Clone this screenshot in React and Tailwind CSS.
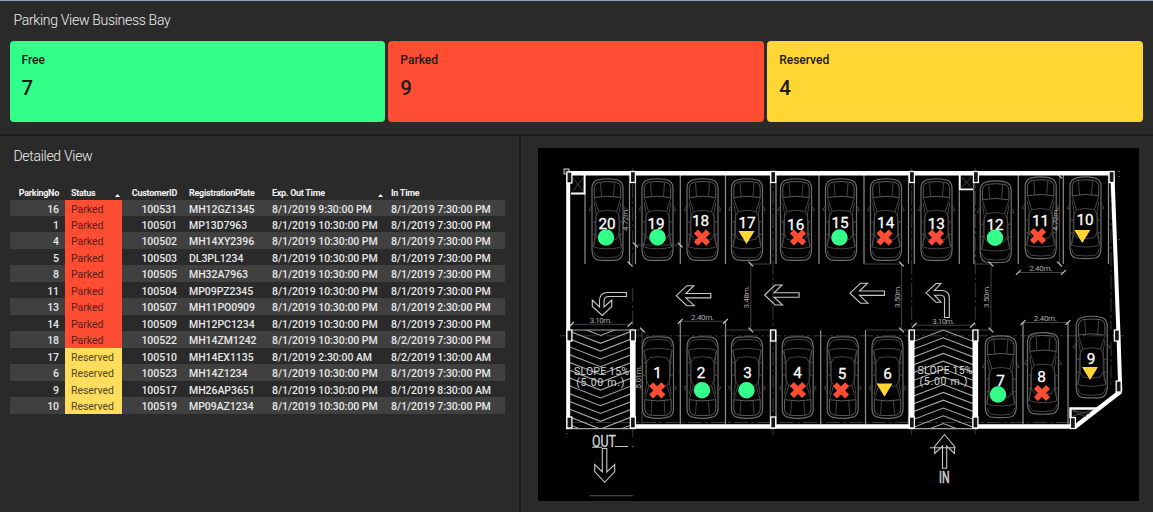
const SUMMARY = [
  { label: 'Free', value: 7, color: 'bg-[#33ff8a]' },
  { label: 'Parked', value: 9, color: 'bg-[#ff4d33]' },
  { label: 'Reserved', value: 4, color: 'bg-[#ffd633]' },
];

const ROWS = [
  [16, 'Parked', 100531, 'MH12GZ1345', '8/1/2019 9:30:00 PM', '8/1/2019 7:30:00 PM'],
  [1, 'Parked', 100501, 'MP13D7963', '8/1/2019 10:30:00 PM', '8/1/2019 7:30:00 PM'],
  [4, 'Parked', 100502, 'MH14XY2396', '8/1/2019 10:30:00 PM', '8/1/2019 7:30:00 PM'],
  [5, 'Parked', 100503, 'DL3PL1234', '8/1/2019 10:30:00 PM', '8/1/2019 7:30:00 PM'],
  [8, 'Parked', 100505, 'MH32A7963', '8/1/2019 10:30:00 PM', '8/1/2019 7:30:00 PM'],
  [11, 'Parked', 100504, 'MP09PZ2345', '8/1/2019 10:30:00 PM', '8/1/2019 7:30:00 PM'],
  [13, 'Parked', 100507, 'MH11PO0909', '8/1/2019 10:30:00 PM', '8/1/2019 2:30:00 PM'],
  [14, 'Parked', 100509, 'MH12PC1234', '8/1/2019 10:30:00 PM', '8/1/2019 7:30:00 PM'],
  [18, 'Parked', 100522, 'MH14ZM1242', '8/1/2019 10:30:00 PM', '8/2/2019 7:30:00 PM'],
  [17, 'Reserved', 100510, 'MH14EX1135', '8/1/2019 2:30:00 AM', '8/2/2019 1:30:00 AM'],
  [6, 'Reserved', 100523, 'MH14Z1234', '8/1/2019 10:30:00 PM', '8/1/2019 7:30:00 PM'],
  [9, 'Reserved', 100517, 'MH26AP3651', '8/1/2019 10:30:00 PM', '8/1/2019 8:30:00 AM'],
  [10, 'Reserved', 100519, 'MP09AZ1234', '8/1/2019 10:30:00 PM', '8/1/2019 7:30:00 PM'],
];

// car: centre x, top y, flipped; label: x, baseline; marker: x, y
const SPOTS = [
  { n: 20, car: [607.5, 178.5, 0], at: [607, 228.8], m: [606, 237.5], s: 'free' },
  { n: 19, car: [657.5, 178.5, 0], at: [656, 228.6], m: [657.5, 237.3], s: 'free' },
  { n: 18, car: [702.5, 178.5, 0], at: [700.5, 226], m: [702, 237.7], s: 'parked' },
  { n: 17, car: [747, 178.5, 0], at: [747, 227.5], m: [746.5, 237.3], s: 'reserved' },
  { n: 16, car: [796, 178.5, 0], at: [795.7, 229.5], m: [798, 237.5], s: 'parked' },
  { n: 15, car: [841, 178.5, 0], at: [840, 227.6], m: [839.5, 237.5], s: 'free' },
  { n: 14, car: [886, 178.5, 0], at: [885.7, 228], m: [884.5, 237.5], s: 'parked' },
  { n: 13, car: [936.5, 178.5, 0], at: [936.3, 228.5], m: [936, 237.5], s: 'parked' },
  { n: 12, car: [995.7, 180.7, 0], at: [995, 230], m: [995, 237.7], s: 'free' },
  { n: 11, car: [1040.7, 176.7, 0], at: [1040.5, 226], m: [1038, 236], s: 'parked' },
  { n: 10, car: [1085.5, 176.7, 0], at: [1085, 224.5], m: [1082.3, 236.3], s: 'reserved' },
  { n: 1, car: [658, 336.7, 1], at: [657.5, 378], m: [657.3, 390.3], s: 'parked' },
  { n: 2, car: [702.5, 336.7, 1], at: [701, 378], m: [702, 390.3], s: 'free' },
  { n: 3, car: [747, 336.7, 1], at: [747.6, 377.5], m: [746.5, 390.3], s: 'free' },
  { n: 4, car: [797.7, 336.7, 1], at: [797.5, 378], m: [798, 390], s: 'parked' },
  { n: 5, car: [842.7, 336.7, 1], at: [842, 379.3], m: [841, 390.3], s: 'parked' },
  { n: 6, car: [887.5, 336.7, 1], at: [887.5, 378.5], m: [884.5, 390], s: 'reserved' },
  { n: 7, car: [1000.8, 335.7, 0], at: [1000.5, 385.7], m: [998, 394.5], s: 'free' },
  { n: 8, car: [1043, 332.3, 0], at: [1041.5, 382.2], m: [1042, 393], s: 'parked' },
  { n: 9, car: [1091.7, 316, 0], at: [1091, 364.2], m: [1090, 373.3], s: 'reserved' },
];

const COLUMNS = [
  [566.5, 172], [630, 171.5], [770.3, 171.5], [909, 171.5], [973, 171.5], [1108.7, 171.5],
  [566.5, 330], [630, 330], [770.3, 330], [909, 330], [972.5, 330], [1114, 330],
  [566.5, 417], [630, 417], [770.3, 417], [909, 417], [972.5, 417], [1070, 417.5], [1115.8, 381],
];

const DIVIDERS = [
  'M585 175V264M629.5 175V264M635.5 175V264M680.3 175V264M725.5 175V264M770.5 175V264M776 175V264',
  'M819 175V264M864 175V264M908.5 175V264M914.3 175V264M959.3 175V264M973.8 175V264M1018.3 175V264M1063.3 175V264M1108.5 175V264',
  'M680.3 321V424M725.5 321V424M770.3 330V424M776 330V424M820.7 330V424M865.5 330V424M908.5 330V424M1023 322V424M1068 322V424',
].join('');

const DIMENSIONS = [
  'M570 324.3H631M635 245H681M680 321.3H726M914 325.2H973M1018 272.5H1064M1023 322.5H1069',
  'M750.8 264V330M901.5 264V330M991 264V330M1059.5 175V264M642 330V424M751 264H770M864 264H902M974 264H991',
  'M636 330H643M725 330H770M865 330H909M978 330H991M914 330H972',
].join('');

const TICKS = [
  [571.5, 324.3], [630, 324.3], [635.5, 245], [680.3, 245], [680.3, 321.3], [725.5, 321.3], [914.3, 325.2], [972.5, 325.2],
  [1018.3, 272.5], [1063.3, 272.5], [1023, 322.5], [1068, 322.5], [750.8, 264], [750.8, 330], [901.5, 264], [901.5, 330],
  [991, 264], [991, 330], [1059.5, 264], [1059.5, 176], [642.5, 330], [630, 264],
];

const MEASURES = [
  { t: '3.10m.', x: 600.8, y: 323, w: 22 },
  { t: '2.40m.', x: 702.5, y: 319.8, w: 23 },
  { t: '3.10m.', x: 943.3, y: 323.8, w: 22 },
  { t: '2.40m.', x: 1040.7, y: 271, w: 23 },
  { t: '2.40m.', x: 1045.3, y: 320.8, w: 23 },
  { t: '4.72m.', x: 627.5, y: 219.5, w: 23, r: -90 },
  { t: '3.48m.', x: 749, y: 297, w: 23, r: -90 },
  { t: '3.50m.', x: 899.8, y: 296.5, w: 23, r: -90 },
  { t: '3.50m.', x: 989, y: 296.5, w: 23, r: -90 },
  { t: '4.72m.', x: 1057.5, y: 219.5, w: 23, r: -90 },
  { t: '5.01m.', x: 641, y: 377, w: 23, r: -90 },
];

const LEFT_ARROW = 'M0 0L10.5 -10H17.5L9.5 -2.2H34.5V2.2H9.5L18 10H10.5Z';

function Car({ x, y, flipped }) {
  return (
    <g
      transform={flipped ? `translate(${x} ${y + 82}) scale(1 -1)` : `translate(${x} ${y})`}
      fill="none"
      stroke="#4c4c4c"
      strokeWidth="0.9"
    >
      <path
        d="M-10 1.5Q0 -1 10 1.5Q15 3 15.5 9V72Q15 80 10 81.3Q0 82.6 -10 81.3Q-15 80 -15.5 72V9Q-15 3 -10 1.5Z"
        stroke="#6e6e6e"
        strokeWidth="1.2"
      />
      <path d="M-9 3.7Q0 2.4 9 3.7Q13 5 13.2 9V19Q0 16.5 -13.2 19V9Q-13 5 -9 3.7Z" stroke="#666" />
      <path d="M-7 4.5L-6 18M7 4.5L6 18" />
      <path d="M-13.2 19.5L-9 33Q0 30.5 9 33L13.2 19.5" />
      <path d="M-9 33Q-12.3 37 -12.3 44V55L-8.5 61Q0 63 8.5 61L12.3 55V44Q12.3 37 9 33" />
      <path d="M-13.3 24L-11.5 35V57L-14 68M13.3 24L11.5 35V57L14 68M-15.5 43.5H-11.8M15.5 43.5H11.8M-15.5 56H-11.8M15.5 56H11.8" />
      <path d="M-15.5 27L-18.5 31.5L-15.5 32.5M15.5 27L18.5 31.5L15.5 32.5" />
      <path d="M-12.3 55L-14 68.5Q-8 70.3 0 70.3Q8 70.3 14 68.5L12.3 55" />
      <path d="M-14 72Q-13 77 -9.5 78.6Q0 80 9.5 78.6Q13 77 14 72" />
    </g>
  );
}

function Marker({ x, y, status }) {
  if (status === 'free') return <circle cx={x} cy={y} r="8.2" fill="#33ff8a" />;
  if (status === 'reserved')
    return <path d="M-8 -6.4H8L0 6.8Z" transform={`translate(${x} ${y})`} fill="#ffd633" />;
  return (
    <path
      d="M-6.1 -6.1L6.1 6.1M6.1 -6.1L-6.1 6.1"
      transform={`translate(${x} ${y})`}
      stroke="#ff4d33"
      strokeWidth="5.6"
    />
  );
}

function FloorPlan() {
  const steps = Array.from({ length: 15 }, (_, i) => i * 7.8);
  return (
    <svg
      className="block h-[353px] w-[601px] bg-black"
      viewBox="538 148 601 353"
      fontFamily="'Liberation Sans', Arial, sans-serif"
      fill="none"
    >
      <defs>
        <clipPath id="ramp-out"><rect x="570" y="330" width="60.5" height="98.5" /></clipPath>
        <clipPath id="ramp-in"><rect x="914" y="329.5" width="59" height="99" /></clipPath>
      </defs>

      <path
        d="M632.7 168V184M632.7 184V268M632.7 288V330M632.7 428V437M773 168V436M911.7 168V438M975.3 168V330M975.3 428V434M1111 183V330M1111 342V385M560 335.8H1124M573 422.5H1068"
        stroke="#484848"
        strokeWidth="0.8"
        strokeDasharray="14 3 3 3"
      />
      {SPOTS.map((s) => (
        <Car key={s.n} x={s.car[0]} y={s.car[1]} flipped={s.car[2]} />
      ))}
      <path d={DIVIDERS} stroke="#8f8f8f" strokeWidth="1.2" />
      <path d={DIMENSIONS} stroke="#505050" strokeWidth="0.8" />
      {TICKS.map(([x, y]) => (
        <path
          key={`${x}-${y}`}
          d={y > 264 && x !== 750.8 && x !== 901.5 && x !== 991 && x !== 642.5 ? 'M-2.4 2.4L2.4 -2.4' : 'M-2.4 -2.4L2.4 2.4'}
          transform={`translate(${x} ${y})`}
          stroke="#c4c4c4"
          strokeWidth="1.3"
        />
      ))}

      <g stroke="#a6a6a6" strokeWidth="1.1">
        <g clipPath="url(#ramp-out)">
          {steps.map((s) => (
            <path key={s} d={`M569 ${323.2 + s}L600.5 ${335.5 + s}L632 ${323.2 + s}`} />
          ))}
        </g>
        <g clipPath="url(#ramp-in)">
          {steps.map((s) => (
            <path key={s} d={`M912 ${342 + s}L943.3 ${330 + s}L975 ${342 + s}`} />
          ))}
        </g>
        <path d="M566 428.6H636M909 428.6H978M572 330H630" />
      </g>

      <g stroke="#fff" strokeLinejoin="miter">
        <path d="M1110 173H568.2V429" strokeWidth="4" />
        <path d="M568 173.2H1112" strokeWidth="4.6" />
        <path d="M1112.5 176L1118.3 330L1120.3 391" strokeWidth="4" />
        <path d="M1120.5 391.5L1074.5 427.3" strokeWidth="4.6" />
        <path d="M636 426.5H912M976 426.5H1074" strokeWidth="4.6" />
        <path d="M632.8 330V428.8M911.7 330V428.8M975.3 330V428.8" strokeWidth="5.6" />
        <path d="M584.5 175V193.5H571M959.8 175V189.3H973" strokeWidth="1.8" />
        <path d="M1070.5 418V408.5H1098" strokeWidth="2.4" />
        <rect x="564" y="169" width="5" height="5" strokeWidth="0.8" fill="#222" />
      </g>
      <path
        d="M573 178L583 191M583 178L573 191M961.5 177L971.5 187.5M971.5 177L961.5 187.5M1072 410L1090 414M1073 416L1092 410M1073 411L1086 417"
        stroke="#555"
        strokeWidth="0.8"
      />
      {COLUMNS.map(([x, y]) => (
        <rect key={`${x}-${y}`} x={x + 0.4} y={y} width="5" height="11" fill="#161616" stroke="#fff" strokeWidth="1.3" />
      ))}
      <path d="M1118.5 171.5h1M1118.5 176.5h1M1118.5 239.5h1M566.5 433.5h1" stroke="#888" />

      <g stroke="#c8c8c8" strokeWidth="1.1">
        <path d={LEFT_ARROW} transform="translate(676.3 295.7)" />
        <path d={LEFT_ARROW} transform="translate(764.6 295)" />
        <path d={LEFT_ARROW} transform="translate(850 293.2)" />
        <path d="M626.5 292.5H607Q599.5 293 599.5 301V307L592.3 300V306.5L602.3 315.5L611.8 306.5V300L604 307V300.5Q604.3 297 608 296.5H626.5Z" />
        <path d="M926 292.8L936 283.5H941L934.5 290.5H943Q949.3 291.5 949.3 298V317.5H944.5V299Q944.5 295.5 941 295.2H934.5L941 302.2H936Z" />
        <path d="M602.3 448.5V472L594.7 464.5V471.5L604.7 482.3L614.7 471.5V464.5L606.8 472V448.5Z" />
        <path d="M942.5 468.3V446L934.7 453.5V446.5L944.5 434.5L954.5 446.5V453.5L946.7 446V468.3ZM930 447.7H955.5" />
        <path d="M592 447.3H602M615 446.5H628M632.5 446.7h1" />
        <path d="M589.5 495.7H633" stroke="#555" />
      </g>

      <g fill="#a8a8a8" fontSize="8" textAnchor="middle" fontFamily="Roboto, sans-serif">
        {MEASURES.map((m) => (
          <text
            key={`${m.x}-${m.y}`}
            transform={`translate(${m.x} ${m.y}) rotate(${m.r || 0})`}
            textLength={m.w}
          >
            {m.t}
          </text>
        ))}
      </g>
      <g fill="#d6d6d6" textAnchor="middle" fontSize="10.5" fontFamily="Roboto, sans-serif">
        <text x="601.5" y="375" textLength="55">SLOPE 15%</text>
        <text x="600.3" y="386.2" textLength="48">(5.00 m.)</text>
        <text x="945" y="373.8" textLength="55">SLOPE 15%</text>
        <text x="943.5" y="385.2" textLength="48">(5.00 m.)</text>
        <text x="604" y="446.8" fontSize="16" textLength="24" lengthAdjust="spacingAndGlyphs" stroke="#d6d6d6" strokeWidth="0.3">OUT</text>
        <text x="944.3" y="482.5" fontSize="16" textLength="10.5" lengthAdjust="spacingAndGlyphs" stroke="#d6d6d6" strokeWidth="0.5">IN</text>
      </g>

      <g fill="#fff" stroke="#fff" strokeWidth="0.3" fontSize="15.3" textAnchor="middle" fontFamily="Roboto, sans-serif">
        {SPOTS.map((s) => (
          <text key={s.n} x={s.at[0]} y={s.at[1]}>{s.n}</text>
        ))}
      </g>
      {SPOTS.map((s) => (
        <Marker key={s.n} x={s.m[0]} y={s.m[1]} status={s.s} />
      ))}
    </svg>
  );
}

function SortArrow() {
  return (
    <svg className="mt-[5px] h-[3px] w-[5px]" viewBox="0 0 5 3" fill="#fff">
      <path d="M0 3L2.5 0L5 3Z" />
    </svg>
  );
}

const GRID = 'grid grid-cols-[55px_57px_61px_83px_119px_119px]';

function DetailTable() {
  return (
    <div className="ml-[10px] mt-[19px] w-[494.5px] whitespace-nowrap">
      <div className={`${GRID} h-[14.5px] items-center text-[9px] font-bold leading-[16px] tracking-[-0.28px] text-[#f2f2f2]`}>
        <span className="pr-[6px] text-right">ParkingNo</span>
        <span className="flex items-center justify-between pl-[6px] pr-[2px]">Status<SortArrow /></span>
        <span className="pr-[6px] text-right">CustomerID</span>
        <span className="pl-[6px]">RegistrationPlate</span>
        <span className="flex items-center justify-between pl-[6px] pr-[2px]">Exp. Out Time<SortArrow /></span>
        <span className="pl-[6px]">In Time</span>
      </div>
      {ROWS.map(([no, status, id, plate, out, inn], i) => (
        <div
          key={no}
          className={`${GRID} h-[16.47px] text-[10.5px] font-medium leading-[19.5px] tracking-[-0.04px] text-[#e8e8e8] ${i % 2 === 0 ? 'bg-[#404040]' : ''}`}
        >
          <span className="pr-[6px] text-right">{no}</span>
          <span
            className={`h-[16.47px] pl-[6px] font-normal ${status === 'Parked' ? 'bg-[#ff4d33] text-[#54201a]' : 'bg-[#ffdd5c] text-[#4f451f]'}`}
          >
            {status}
          </span>
          <span className="pr-[6px] text-right">{id}</span>
          <span className="pl-[6px]">{plate}</span>
          <span className="pl-[6px]">{out}</span>
          <span className="pl-[6px]">{inn}</span>
        </div>
      ))}
    </div>
  );
}

export default function App() {
  return (
    <div className="flex h-[512px] w-[1153px] flex-col overflow-hidden border-t border-[#8ea4c4] bg-[#2a2a2a] font-['Roboto',sans-serif]">
      <section className="h-[135px] shrink-0 border-b-2 border-[#1c1c1c] pl-[9.5px] pr-[10px]">
        <h1 className="h-[39.5px] pl-1 pt-[9px] text-[14px] font-light leading-5 tracking-[-0.3px] text-[#f0f0f0]">Parking View Business Bay</h1>
        <div className="grid grid-cols-3 gap-[3px]">
          {SUMMARY.map((c) => (
            <div key={c.label} className={`h-[81.5px] rounded-[4px] pl-3 pt-[10px] text-[#1b1b1b] ${c.color}`}>
              <div className="text-[12px] font-medium leading-[18px]">{c.label}</div>
              <div className="mt-[5px] text-[20.5px] font-medium leading-7">{c.value}</div>
            </div>
          ))}
        </div>
      </section>
      <div className="flex flex-1">
        <section className="w-[521px] shrink-0 border-r-2 border-[#1c1c1c]">
          <h2 className="pl-[13.5px] pt-[10px] text-[14px] font-light leading-5 tracking-[-0.3px] text-[#f0f0f0]">Detailed View</h2>
          <DetailTable />
        </section>
        <section className="flex-1 pl-[17px] pt-[12px]">
          <FloorPlan />
        </section>
      </div>
    </div>
  );
}
